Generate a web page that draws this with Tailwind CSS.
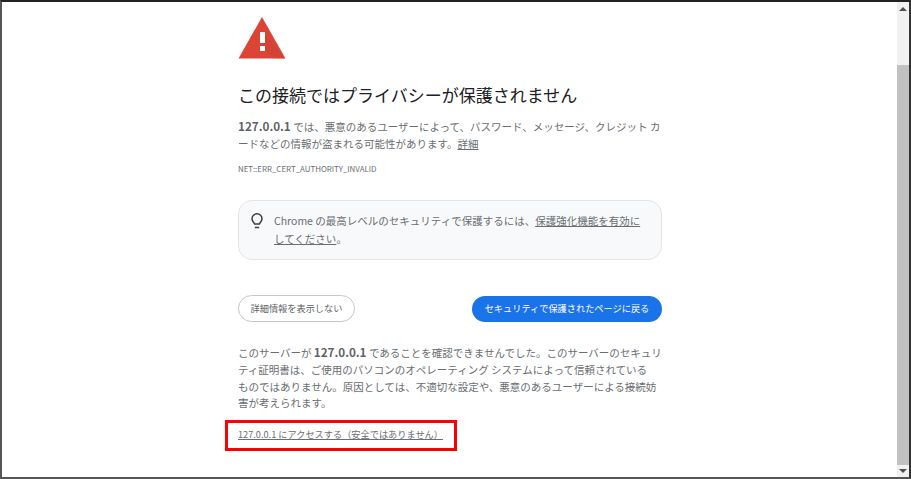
<!DOCTYPE html>
<html lang="ja">
<head>
<meta charset="UTF-8">
<title>プライバシー エラー</title>
<script src="https://cdn.jsdelivr.net/npm/@tailwindcss/browser@4"></script>
</head>
<body class="bg-white overflow-hidden font-['Noto_Sans_CJK_JP','Noto_Sans',sans-serif]">
<!-- screenshot frame -->
<div class="w-[911px] h-[479px] flex overflow-hidden border-t-2 border-t-[#222] border-l-2 border-l-[#555] border-r-2 border-r-[#333] border-b-2 border-b-[#555]">
  <main class="flex-1 min-w-0 pl-[236px]">
    <div class="w-[424px]">
      <svg class="w-[48px] h-[42px] mt-[15px] block" viewBox="0 0 48 42">
        <path d="M24 0 L47.5 41.5 H0.5 Z" fill="#dc4436"/>
        <path d="M24 14 L47.5 41.5 H36 L24 30Z" fill="#b93a2e" opacity=".25"/>
        <rect x="22" y="15" width="5" height="11" fill="#fff"/>
        <rect x="22" y="29" width="5" height="5" fill="#fff"/>
      </svg>
      <h1 class="mt-[23px] text-[17px] leading-[26px] text-[#202124]">この接続ではプライバシーが保護されません</h1>
      <p class="mt-[10px] text-[10.5px] leading-[17px] text-[#6a6e72]"><b class="font-bold text-[11.7px] leading-none text-[#5f6368]">127.0.0.1</b> では、悪意のあるユーザーによって、パスワード、メッセージ、クレジット カードなどの情報が盗まれる可能性があります。<a class="underline">詳細</a></p>
      <p class="mt-[10px] text-[7.9px] leading-[14px] text-[#6a6e72]">NET::ERR_CERT_AUTHORITY_INVALID</p>
      <div class="mt-[24px] h-[60px] flex bg-[#f8f9fa] border border-[#e3e5e8] rounded-[14px] pl-[11px] pr-[18px] pt-[11px]">
        <svg class="w-[14px] h-[16px] mt-[1px] shrink-0" viewBox="0 0 14 16" fill="none" stroke="#3c4043" stroke-width="1.5">
          <path d="M4.6 11 C4.4 9.6 2 8.6 2 5.8 A5 5 0 0 1 12 5.8 C12 8.6 9.6 9.6 9.4 11 Z"/>
          <path d="M4.8 14.5 H9.2"/>
        </svg>
        <p class="ml-[10px] text-[10.5px] leading-[17.5px] text-[#6a6e72]">Chrome の最高レベルのセキュリティで保護するには、<a class="underline">保護強化機能を有効にしてください</a>。</p>
      </div>
      <div class="mt-[35px] flex justify-between items-center">
        <button class="w-[117px] h-[27px] rounded-full border border-[#c4c6c9] text-[9.2px] text-[#5f6368]">詳細情報を表示しない</button>
        <button class="w-[190px] h-[26px] rounded-full bg-[#1a73e8] text-[9.2px] text-white">セキュリティで保護されたページに戻る</button>
      </div>
      <p class="mt-[23px] text-[10.5px] leading-[16.8px] text-[#6a6e72]">このサーバーが <b class="font-bold text-[11.7px] leading-none text-[#5f6368]">127.0.0.1</b> であることを確認できませんでした。このサーバーのセキュリティ証明書は、ご使用のパソコンのオペレーティング システムによって信頼されている<br>ものではありません。原因としては、不適切な設定や、悪意のあるユーザーによる接続妨害が考えられます。</p>
      <div class="relative mt-[14px]">
        <a class="underline text-[9.2px] leading-[16px] block text-[#6a6e72]">127.0.0.1 にアクセスする（安全ではありません）</a>
        <div class="absolute left-[-13px] top-[-6px] w-[232px] h-[31px] border-[3px] border-[#ff0000]"></div>
      </div>
    </div>
  </main>
  <!-- scrollbar -->
  <div class="w-[12px] bg-[#f1f1f1] flex flex-col items-center">
    <div class="h-[14px] flex items-center justify-center shrink-0"><div class="w-0 h-0 border-x-[4px] border-x-transparent border-b-[4px] border-b-[#505050]"></div></div>
    <div class="mt-[49px] h-[400px] w-full bg-[#c1c1c1]"></div>
    <div class="flex-1 flex items-center justify-center"><div class="w-0 h-0 border-x-[4px] border-x-transparent border-t-[4px] border-t-[#505050]"></div></div>
  </div>
</div>
</body>
</html>
